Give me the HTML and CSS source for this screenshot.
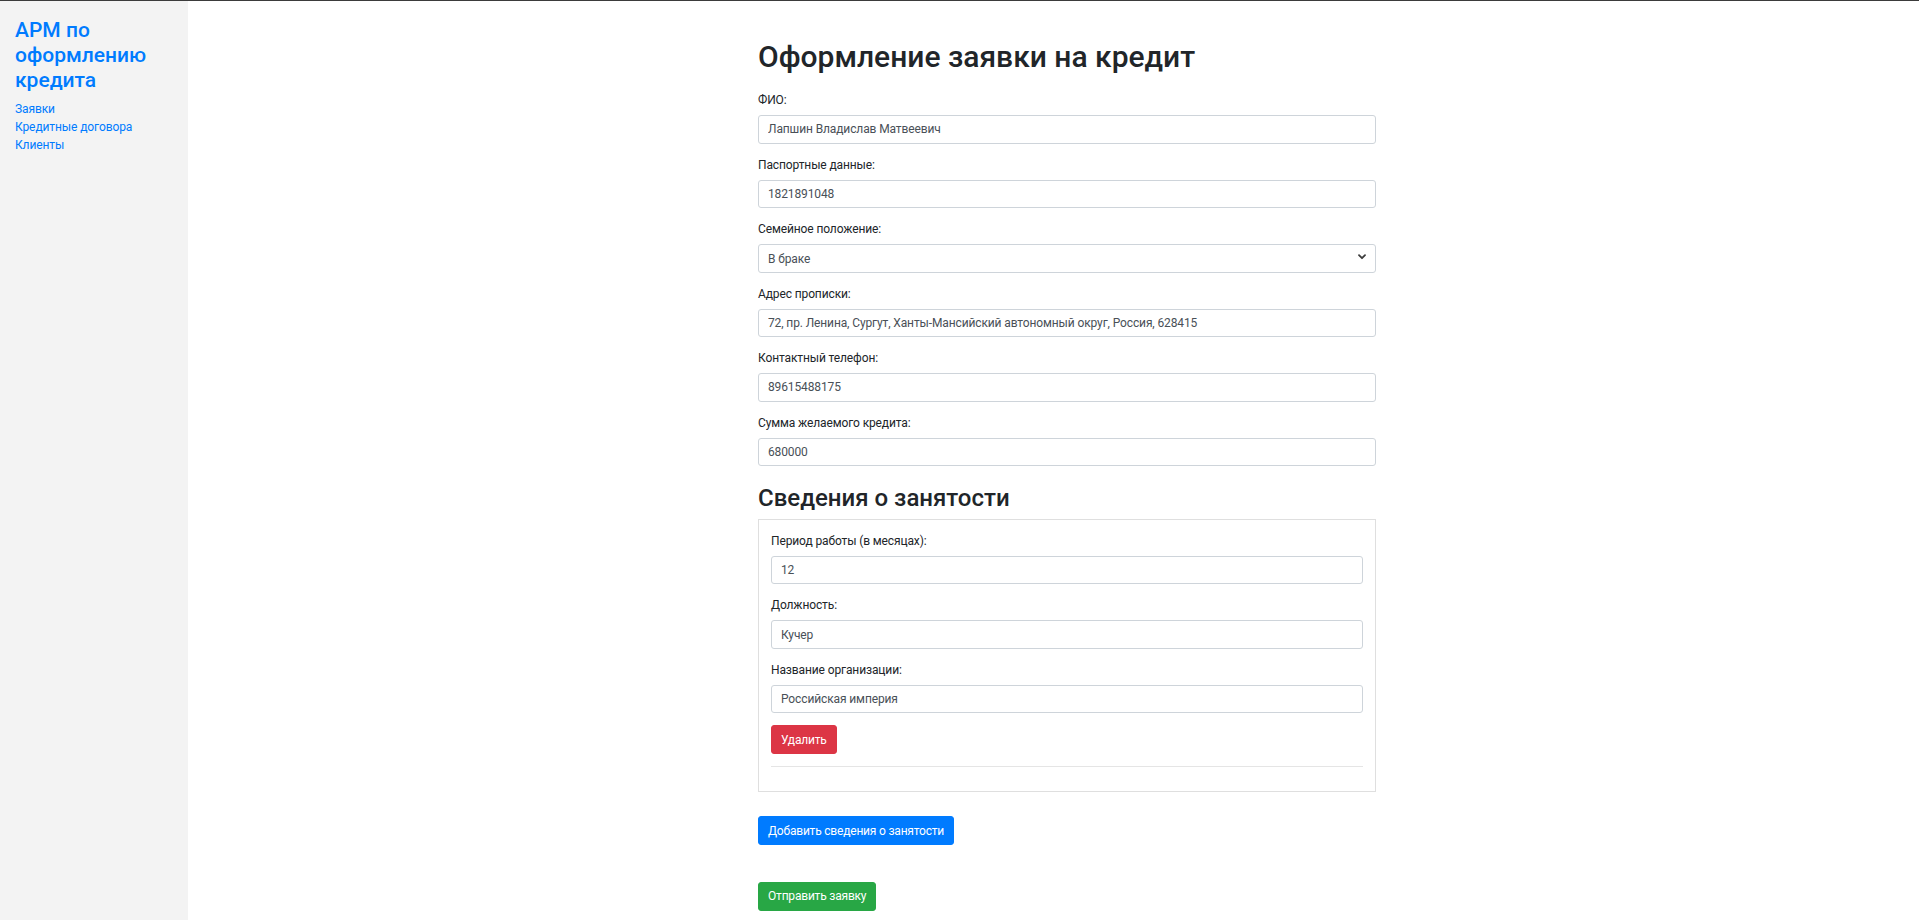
FILE: index.html
```html
<!DOCTYPE html>
<html lang="ru">
<head>
<meta charset="utf-8">
<title>Оформление заявки на кредит</title>
<link rel="stylesheet" href="styles.css">
</head>
<body>
<div class="app">
  <aside class="sidebar">
    <h3 class="brand">АРМ по оформлению кредита</h3>
    <nav class="nav">
      <a href="#">Заявки</a>
      <a href="#">Кредитные договора</a>
      <a href="#">Клиенты</a>
    </nav>
  </aside>
  <main class="main">
    <div class="content">
      <h1 class="title">Оформление заявки на кредит</h1>
      <form class="form">
        <div class="form-group">
          <label class="label">ФИО:</label>
          <input class="form-control" type="text" value="Лапшин Владислав Матвеевич">
        </div>
        <div class="form-group">
          <label class="label">Паспортные данные:</label>
          <input class="form-control" type="text" value="1821891048">
        </div>
        <div class="form-group">
          <label class="label">Семейное положение:</label>
          <div class="select-wrap">
            <select class="form-control select"><option>В браке</option></select>
            <svg class="chevron" width="8" height="6" viewBox="0 0 8 6" aria-hidden="true"><polyline points="1,1.2 4,4.2 7,1.2" fill="none" stroke="#3c3c3c" stroke-width="1.8" stroke-linecap="round" stroke-linejoin="round"/></svg>
          </div>
        </div>
        <div class="form-group">
          <label class="label">Адрес прописки:</label>
          <input class="form-control" type="text" value="72, пр. Ленина, Сургут, Ханты-Мансийский автономный округ, Россия, 628415">
        </div>
        <div class="form-group">
          <label class="label">Контактный телефон:</label>
          <input class="form-control" type="text" value="89615488175">
        </div>
        <div class="form-group">
          <label class="label">Сумма желаемого кредита:</label>
          <input class="form-control" type="text" value="680000">
        </div>

        <h2 class="subtitle">Сведения о занятости</h2>
        <div class="job-card">
          <div class="form-group">
            <label class="label">Период работы (в месяцах):</label>
            <input class="form-control" type="text" value="12">
          </div>
          <div class="form-group">
            <label class="label">Должность:</label>
            <input class="form-control" type="text" value="Кучер">
          </div>
          <div class="form-group">
            <label class="label">Название организации:</label>
            <input class="form-control" type="text" value="Российская империя">
          </div>
          <button type="button" class="btn btn-danger">Удалить</button>
          <hr class="divider">
        </div>

        <div class="add-row">
          <button type="button" class="btn btn-primary">Добавить сведения о занятости</button>
        </div>
        <div class="submit-row">
          <button type="submit" class="btn btn-success">Отправить заявку</button>
        </div>
      </form>
    </div>
  </main>
</div>
</body>
</html>
```

FILE: styles.css
```css
html, body {
  margin: 0;
  padding: 0;
}

body {
  font-family: Roboto, "Segoe UI", "Noto Sans", sans-serif;
  font-size: 12px;
  line-height: 18px;
  color: #212529;
  background: #fff;
  border-top: 1px solid #3b3b3b;
}

.app {
  display: flex;
  min-height: 919px;
}

.sidebar {
  width: 188px;
  flex-shrink: 0;
  box-sizing: border-box;
  padding: 17px 15px 15px;
  background: #f3f3f3;
}

.brand {
  margin: 0 0 6px;
  font-size: 21px;
  line-height: 25.2px;
  font-weight: 500;
  color: #007bff;
}

.nav a {
  display: block;
  color: #007bff;
  text-decoration: none;
  font-size: 12px;
  line-height: 18px;
  letter-spacing: -0.1px;
}

.main {
  flex: 1;
  padding: 38px 0 0 570px;
}

.content {
  width: 618px;
}

.title {
  margin: 0 0 16px;
  font-size: 30px;
  line-height: 36px;
  font-weight: 500;
  color: #212529;
}

.form-group {
  margin-bottom: 12px;
}

.label {
  display: block;
  margin-bottom: 6px;
  font-size: 12px;
  line-height: 18px;
  letter-spacing: -0.12px;
}

.form-control {
  display: block;
  width: 100%;
  height: 28.5px;
  box-sizing: border-box;
  padding: 4.5px 9px;
  font-family: inherit;
  font-size: 12px;
  line-height: 18px;
  letter-spacing: -0.12px;
  color: #495057;
  background: #fff;
  border: 1px solid #ced4da;
  border-radius: 3px;
  margin: 0;
}

.select-wrap {
  position: relative;
}

.select {
  -webkit-appearance: none;
  appearance: none;
  padding-right: 24px;
}

.chevron {
  position: absolute;
  right: 10px;
  top: 10px;
  pointer-events: none;
}

.subtitle {
  margin: 18px 0 6px;
  font-size: 24px;
  line-height: 28.8px;
  font-weight: 500;
  color: #212529;
}

.job-card {
  border: 1px solid #dfdfdf;
  padding: 12px;
}

.divider {
  margin: 12px 0;
  border: 0;
  border-top: 1px solid rgba(0, 0, 0, 0.1);
  height: 0;
}

.btn {
  display: inline-block;
  margin: 0;
  font-family: inherit;
  font-size: 12px;
  line-height: 18px;
  letter-spacing: -0.2px;
  font-weight: 400;
  padding: 4.5px 9px;
  border: 1px solid transparent;
  border-radius: 3px;
  color: #fff;
  cursor: pointer;
}

.btn-danger {
  background: #dc3545;
  border-color: #dc3545;
}

.btn-primary {
  background: #007bff;
  border-color: #007bff;
}

.btn-success {
  background: #28a745;
  border-color: #28a745;
}

.add-row {
  margin-top: 24px;
}

.submit-row {
  margin-top: 36.5px;
}
```
